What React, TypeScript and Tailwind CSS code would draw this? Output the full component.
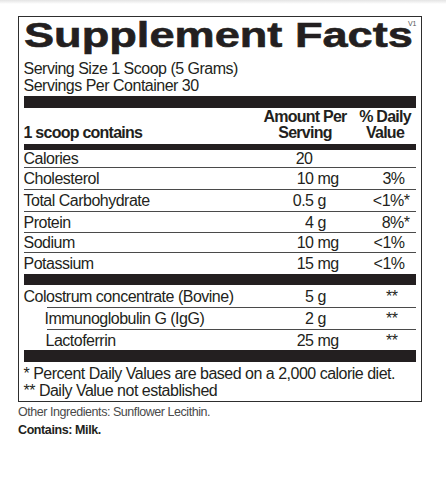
import React from "react";

type Row = {
  name: string;
  num: string;
  unit: string;
  dv: string;
  star?: boolean;
  h: string;
};

const mainRows: Row[] = [
  { name: "Calories", num: "20", unit: "", dv: "", h: "h-[17px] leading-[17px]" },
  { name: "Cholesterol", num: "10", unit: "mg", dv: "3%", h: "h-[21px] leading-[22px]" },
  { name: "Total Carbohydrate", num: "0.5", unit: "g", dv: "<1%", star: true, h: "h-[21px] leading-[22px]" },
  { name: "Protein", num: "4", unit: "g", dv: "8%", star: true, h: "h-[20px] leading-[21px]" },
  { name: "Sodium", num: "10", unit: "mg", dv: "<1%", h: "h-[19px] leading-[20px]" },
  { name: "Potassium", num: "15", unit: "mg", dv: "<1%", h: "h-[21px] leading-[22px]" },
];

function Amount({ num, unit }: { num: string; unit: string }) {
  return (
    <div className="w-[83px] flex whitespace-nowrap">
      <span className="w-[50px] text-right">{num}</span>
      {unit && <span className="pl-[4px]">{unit}</span>}
    </div>
  );
}

function Line({ indent }: { indent?: boolean }) {
  return <div className={indent ? "ml-[23px] h-px bg-[#4a4a4a]" : "h-px bg-[#4a4a4a]"} />;
}

export default function App() {
  return (
    <div className="w-[446px] h-[479px] bg-white font-['Liberation_Sans',Arial,sans-serif] tracking-[-0.5px] text-[#231f20] overflow-hidden">
      <div className="h-[4px] bg-linear-to-b from-[#e4e4e4] to-white" />
      <div className="relative ml-[18px] mt-[12px] w-[404px] border-[1.5px] border-[#2e2e2e] pl-[4.5px] pr-[5.5px]">
        <span className="absolute right-[4.5px] top-[3px] text-[7px] leading-[7px] tracking-[0px] text-[#555]">
          V1
        </span>
        <div className="h-[35px] text-[35px] leading-[35px] font-bold tracking-[0px] scale-x-[1.29] origin-left whitespace-nowrap [-webkit-text-stroke:0.6px_#231f20]">
          Supplement Facts
        </div>
        <div className="mt-[8px] text-[16px] leading-[17px] whitespace-nowrap">
          <div>Serving Size 1 Scoop (5 Grams)</div>
          <div>Servings Per Container 30</div>
        </div>
        <div className="mt-[2px] h-[12px] bg-[#231f20]" />
        <div className="flex items-end text-[16px] leading-[16px] font-bold tracking-[-0.75px] pt-[1px] pb-[2.5px] whitespace-nowrap">
          <div className="flex-1">1 scoop contains</div>
          <div className="w-[83px] flex flex-col items-center">
            <span>Amount Per</span>
            <span>Serving</span>
          </div>
          <div className="w-[8px]" />
          <div className="w-[61px] flex flex-col items-center">
            <span>% Daily</span>
            <span>Value</span>
          </div>
        </div>
        <div className="h-[6px] bg-[#231f20]" />
        <div className="text-[16px] whitespace-nowrap">
          {mainRows.map((r, i) => (
            <React.Fragment key={r.name}>
              <div className={`flex ${r.h}`}>
                <div className="flex-1">{r.name}</div>
                {r.name === "Calories" ? (
                  <div className="w-[83px] flex">
                    <span className="w-[49px] text-right">{r.num}</span>
                  </div>
                ) : (
                  <Amount num={r.num} unit={r.unit} />
                )}
                <div className="w-[8px]" />
                <div className="w-[61px] text-right pr-[11px]">
                  {r.dv}
                  {r.star && <span className="-mr-[5px]">*</span>}
                </div>
              </div>
              {i < mainRows.length - 1 && <Line />}
            </React.Fragment>
          ))}
        </div>
        <div className="h-[11px] bg-[#231f20]" />
        <div className="text-[16px] whitespace-nowrap">
          <div className="flex h-[22px] leading-[23px]">
            <div className="flex-1">Colostrum concentrate (Bovine)</div>
            <Amount num="5" unit="g" />
            <div className="w-[8px]" />
            <div className="w-[61px] text-right pr-[18px]">**</div>
          </div>
          <Line indent />
          <div className="flex h-[21px] leading-[22px]">
            <div className="flex-1 pl-[21px]">Immunoglobulin G (IgG)</div>
            <Amount num="2" unit="g" />
            <div className="w-[8px]" />
            <div className="w-[61px] text-right pr-[18px]">**</div>
          </div>
          <Line indent />
          <div className="flex h-[20px] leading-[21px]">
            <div className="flex-1 pl-[22px]">Lactoferrin</div>
            <Amount num="25" unit="mg" />
            <div className="w-[8px]" />
            <div className="w-[61px] text-right pr-[18px]">**</div>
          </div>
        </div>
        <div className="h-[12px] bg-[#231f20]" />
        <div className="pt-[3px] pb-[2px] text-[16px] leading-[17px] whitespace-nowrap">
          <div>* Percent Daily Values are based on a 2,000 calorie diet.</div>
          <div>** Daily Value not established</div>
        </div>
      </div>
      <div className="ml-[18px] mt-[1.5px] text-[12.5px] leading-[18px] tracking-[-0.45px] whitespace-nowrap">
        <div className="text-[#4a4a4a]">Other Ingredients: Sunflower Lecithin.</div>
        <div className="font-bold text-[#231f20] tracking-[-0.4px]">Contains: Milk.</div>
      </div>
    </div>
  );
}
